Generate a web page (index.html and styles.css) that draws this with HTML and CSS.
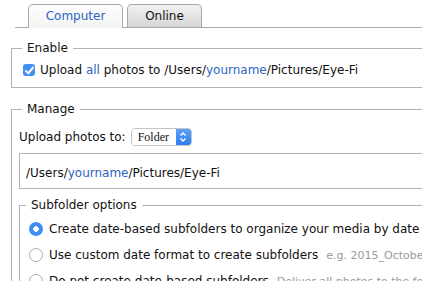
FILE: index.html
```html
<!DOCTYPE html>
<html lang="en">
<head>
  <meta charset="UTF-8">
  <title>Eye-Fi Settings</title>
  <link rel="stylesheet" href="styles.css">
</head>
<body>

<div class="tabs">
  <div class="tab active">Computer</div>
  <div class="tab">Online</div>
</div>

<fieldset class="box enable">
  <legend>Enable</legend>
  <label class="row">
    <input type="checkbox" checked>
    <span>Upload <span class="blue">all</span> photos to /Users/<span class="blue">yourname</span>/Pictures/Eye-Fi</span>
  </label>
</fieldset>

<fieldset class="box manage">
  <legend>Manage</legend>
  <div class="target">
    <span>Upload photos to:</span>
    <div class="select">
      <span class="select-value">Folder</span>
      <span class="select-arrows">
        <svg width="8" height="12" viewBox="0 0 8 12"><path d="M1.5 4.5 L4 2 L6.5 4.5 M1.5 7.5 L4 10 L6.5 7.5" fill="none" stroke="#fff" stroke-width="1.4"/></svg>
      </span>
    </div>
  </div>
  <div class="path">/Users/<span class="blue">yourname</span>/Pictures/Eye-Fi</div>

  <fieldset class="box sub">
    <legend>Subfolder options</legend>
    <label class="row radio-row">
      <input type="radio" name="sub" checked>
      <span>Create date-based subfolders to organize your media by date</span>
    </label>
    <label class="row radio-row">
      <input type="radio" name="sub">
      <span>Use custom date format to create subfolders</span>
      <span class="hint">e.g. 2015_October</span>
    </label>
    <label class="row radio-row">
      <input type="radio" name="sub">
      <span>Do not create date-based subfolders</span>
      <span class="hint">Deliver all photos to the folder</span>
    </label>
  </fieldset>
</fieldset>

</body>
</html>
```

FILE: styles.css
```css
html, body { overflow: hidden; }
body {
  margin: 0;
  width: 480px;
  font-family: 'DejaVu Sans', sans-serif;
  font-size: 12px;
  color: #111;
  background: #fff;
}
.blue { color: #2c64c4; }

/* tabs */
.tabs {
  display: flex;
  gap: 4px;
  margin: 4px 0 0 15px;
  padding-left: 13px;
  height: 23px;
  border-bottom: 1px solid #a9a9a9;
}
.tab {
  width: 73px;
  height: 22px;
  line-height: 23px;
  text-align: center;
  border: 1px solid #a9a9a9;
  border-bottom: none;
  border-radius: 5px 5px 0 0;
  background: linear-gradient(#f1f1f1, #d6d6d6);
}
.tab.active {
  width: 93px;
  height: 23px;
  background: linear-gradient(#fdfdfd, #f3f3f3);
  color: #2c64c4;
}

/* group boxes */
.box {
  margin: 0;
  border: 1px solid #b4b4b4;
  border-right: none;
}
.box legend {
  padding: 0 5px;
  line-height: 16px;
}
.enable {
  margin: 12px 0 0 11px;
  padding: 4px 0 7px 11px;
}
.enable legend { margin-left: -1px; }
.manage {
  margin: 13px 0 0 11px;
  padding: 11px 0 20px 7px;
}
.manage legend { margin-left: 3px; }
.sub {
  margin-top: 8px;
  padding: 3px 0 10px 9px;
}
.sub legend { margin-left: -3px; }

.row {
  display: flex;
  align-items: center;
  gap: 5px;
  height: 20px;
  white-space: nowrap;
}
.radio-row { gap: 6px; height: 26px; }
.hint {
  margin-left: 2px;
  color: #9a9a9a;
  font-size: 11px;
}

input[type=checkbox], input[type=radio] {
  appearance: none;
  margin: 0;
  width: 12px;
  height: 12px;
  flex: none;
}
input[type=checkbox] {
  border-radius: 3px;
  background: #3f8ef4;
  position: relative;
}
input[type=checkbox]::after {
  content: "";
  position: absolute;
  left: 4px;
  top: 1px;
  width: 3px;
  height: 7px;
  border: solid #fff;
  border-width: 0 2px 2px 0;
  transform: rotate(40deg);
}
input[type=radio] {
  width: 14px;
  height: 14px;
  border-radius: 50%;
  border: 1px solid #b0b0b0;
  background: #fff;
  box-sizing: border-box;
}
input[type=radio]:checked {
  border: none;
  background: radial-gradient(circle, #fff 0 2.5px, #3f8ef4 3px);
}

/* manage */
.target {
  display: flex;
  align-items: center;
  gap: 5px;
  height: 18px;
}
.select {
  display: flex;
  width: 61px;
  height: 18px;
  box-sizing: border-box;
  border: 1px solid #c4c4c4;
  border-radius: 4px;
  overflow: hidden;
}
.select-value {
  flex: 1;
  padding-left: 6px;
  line-height: 16px;
  font-family: 'Liberation Serif', serif;
  font-size: 12px;
  background: #fff;
}
.select-arrows {
  width: 15px;
  display: flex;
  align-items: center;
  justify-content: center;
  background: linear-gradient(#5aa0f7, #2f7df0);
}
.path {
  margin-top: 7px;
  height: 34px;
  line-height: 38px;
  padding-left: 6px;
  border: 1px solid #b4b4b4;
  border-right: none;
}
```
